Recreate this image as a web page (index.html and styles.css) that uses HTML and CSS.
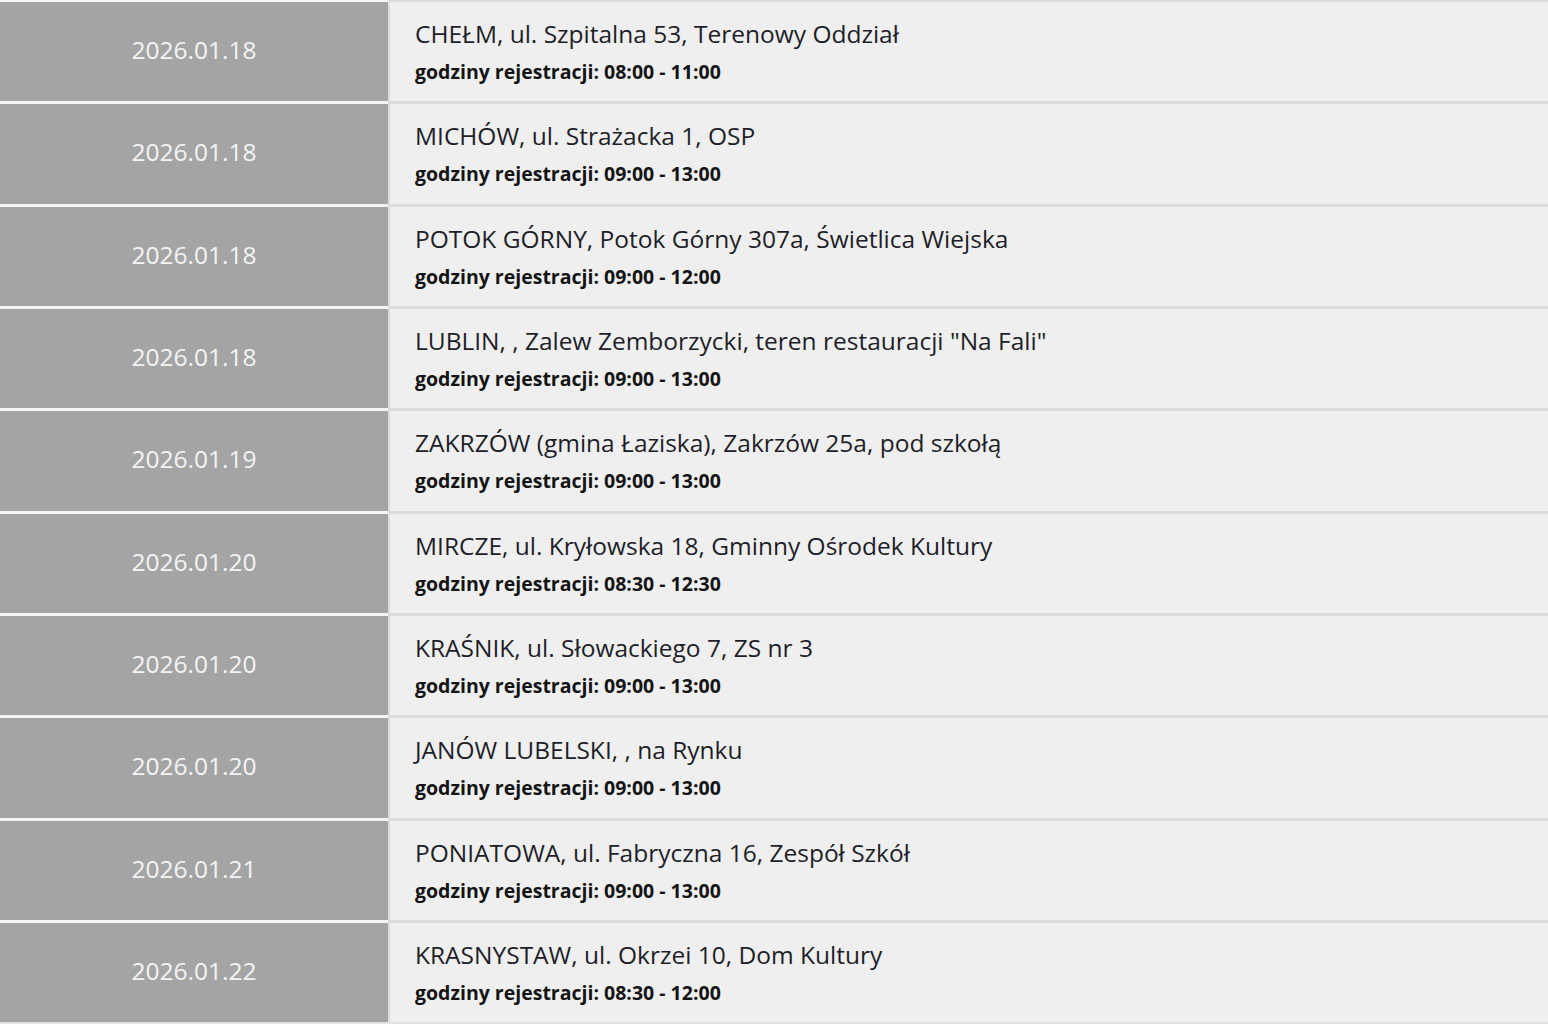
FILE: index.html
```html
<!DOCTYPE html>
<html lang="pl">
<head>
<meta charset="utf-8">
<link rel="stylesheet" href="styles.css">
<title>Terminy</title>
</head>
<body>
<div class="list">
  <div class="row"><div class="date">2026.01.18</div><div class="info"><div class="place">CHEŁM, ul. Szpitalna 53, Terenowy Oddział</div><div class="hours">godziny rejestracji: 08:00 - 11:00</div></div></div>
  <div class="row"><div class="date">2026.01.18</div><div class="info"><div class="place">MICHÓW, ul. Strażacka 1, OSP</div><div class="hours">godziny rejestracji: 09:00 - 13:00</div></div></div>
  <div class="row"><div class="date">2026.01.18</div><div class="info"><div class="place">POTOK GÓRNY, Potok Górny 307a, Świetlica Wiejska</div><div class="hours">godziny rejestracji: 09:00 - 12:00</div></div></div>
  <div class="row"><div class="date">2026.01.18</div><div class="info"><div class="place">LUBLIN, , Zalew Zemborzycki, teren restauracji "Na Fali"</div><div class="hours">godziny rejestracji: 09:00 - 13:00</div></div></div>
  <div class="row"><div class="date">2026.01.19</div><div class="info"><div class="place">ZAKRZÓW (gmina Łaziska), Zakrzów 25a, pod szkołą</div><div class="hours">godziny rejestracji: 09:00 - 13:00</div></div></div>
  <div class="row"><div class="date">2026.01.20</div><div class="info"><div class="place">MIRCZE, ul. Kryłowska 18, Gminny Ośrodek Kultury</div><div class="hours">godziny rejestracji: 08:30 - 12:30</div></div></div>
  <div class="row"><div class="date">2026.01.20</div><div class="info"><div class="place">KRAŚNIK, ul. Słowackiego 7, ZS nr 3</div><div class="hours">godziny rejestracji: 09:00 - 13:00</div></div></div>
  <div class="row"><div class="date">2026.01.20</div><div class="info"><div class="place">JANÓW LUBELSKI, , na Rynku</div><div class="hours">godziny rejestracji: 09:00 - 13:00</div></div></div>
  <div class="row"><div class="date">2026.01.21</div><div class="info"><div class="place">PONIATOWA, ul. Fabryczna 16, Zespół Szkół</div><div class="hours">godziny rejestracji: 09:00 - 13:00</div></div></div>
  <div class="row"><div class="date">2026.01.22</div><div class="info"><div class="place">KRASNYSTAW, ul. Okrzei 10, Dom Kultury</div><div class="hours">godziny rejestracji: 08:30 - 12:00</div></div></div>
</div>
</body>
</html>
```

FILE: styles.css
```css
html, body {
  margin: 0;
  padding: 0;
  background: #e2e2e2;
}
body {
  font-family: "Open Sans", "Noto Sans", sans-serif;
  overflow: hidden;
}
.list {
  display: flex;
  flex-direction: column;
  gap: 3px;
  padding-top: 2px;
  background: linear-gradient(to right, #f6f6f6 388px, #dcdcdc 388px);
}
.row {
  display: flex;
  height: 99.33px;
}
.date {
  width: 388px;
  flex: none;
  box-sizing: border-box;
  background: #a4a4a4;
  color: #f4f4f4;
  font-size: 24.5px;
  display: flex;
  align-items: center;
  justify-content: center;
  padding-bottom: 4px;
  margin-right: 2px;
}
.info {
  flex: 1;
  background: #efefef;
  padding-left: 25px;
  box-sizing: border-box;
  padding-top: 15px;
}
.place {
  font-size: 24.5px;
  color: #1e1e28;
  line-height: 34px;
}
.hours {
  font-size: 19.5px;
  font-weight: bold;
  color: #141414;
  line-height: 26px;
  margin-top: 8px;
}
```
